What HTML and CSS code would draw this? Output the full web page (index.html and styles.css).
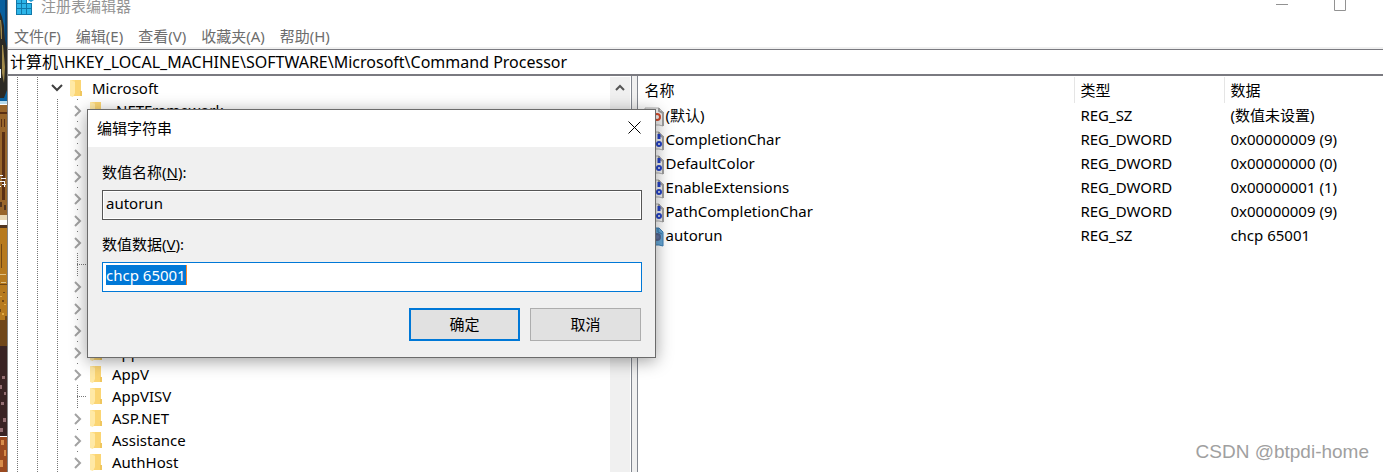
FILE: index.html
```html
<!DOCTYPE html>
<html lang="zh-CN">
<head>
<meta charset="utf-8">
<title>注册表编辑器</title>
<link rel="stylesheet" href="styles.css">
</head>
<body>
<svg class="sprites" aria-hidden="true">
  <symbol id="folder" viewBox="0 0 12 18">
    <path d="M1 1h10v12h1v4H1z" fill="#ffdd83"/>
    <path d="M5 1h6v12h1v4H4z" fill="#fbd573"/>
    <path d="M0 1h1l4 2v11l-2 4-3-1z" fill="#ffe9a6"/>
    <path d="M10 12h2v5h-2z" fill="#efc65f"/>
  </symbol>
  <symbol id="expand" viewBox="0 0 8 12">
    <path d="M1 1l5 5-5 5" fill="none" stroke="#a2a2a2" stroke-width="2"/>
  </symbol>
  <symbol id="page" viewBox="0 0 20 20">
    <path d="M1 1h14l4 4v14l-4-1H1z" fill="#f1f1f1" stroke="#b0b0b0"/>
    <path d="M15 1v3l4 2" fill="none" stroke="#9c9c9c" stroke-width="2"/>
    <path d="M19 5v14" stroke="#a0a0a0" stroke-width="2"/>
  </symbol>
  <symbol id="binary" viewBox="0 0 20 20">
    <use href="#page"/>
    <path d="M5 4v5M10 12v5M15 3v5" stroke="#2442c8" stroke-width="3"/>
    <circle cx="15" cy="13" r="2" fill="#f1f1f1" stroke="#2442c8" stroke-width="2"/>
    <circle cx="6" cy="13" r="2" fill="#f1f1f1" stroke="#2442c8" stroke-width="2"/>
  </symbol>
  <symbol id="string" viewBox="0 0 20 20">
    <use href="#page"/>
    <circle cx="13" cy="10" r="3" fill="none" stroke="#cf4a2b" stroke-width="2"/>
    <path d="M9 4v9M3 9h4v4H3z" fill="none" stroke="#cf4a2b" stroke-width="2"/>
  </symbol>
  <symbol id="string-selected" viewBox="0 0 20 20">
    <path d="M1 1h14l4 4v14l-4-1H1z" fill="#68a8d6" stroke="#3c7fb5"/>
    <path d="M14 1v4l4 2" fill="none" stroke="#3578ad"/>
    <circle cx="13" cy="10" r="3" fill="#6577a4" stroke="#55658f" stroke-width="2"/>
  </symbol>
</svg>
<div class="screen">
  <svg class="desktop" viewBox="0 0 7 472" preserveAspectRatio="none" aria-hidden="true">
    <path fill="#09609e" d="M0 0h7v102H0z"/>
    <path fill="#07406f" d="M5 0h2v48H5z"/>
    <path fill="#2c2a24" d="M0 12l2 5 2 9 1 14 2 8v42l-3 8H0z"/>
    <path fill="#a08a4c" d="M0 20h1l1 9v10H1zM2 45h1l2 22-1 16-2-10z"/>
    <path fill="#b7dced" d="M0 101h7v3H0z"/>
    <path fill="#98662b" d="M0 105h7v110H0z"/>
    <path fill="#593015" d="M0 112h7v2H0zM1 119h1v8H1zM4 119h1v8H4zM2 132h3v68H2z"/>
    <path fill="#e9d8b4" d="M0 215h7v5H0z"/>
    <path fill="#51351f" d="M0 202h2v5H0zM4 205h2v5H4zM0 225h7v3H0z"/>
    <path fill="#b77a1e" d="M0 228h7v92H0z"/>
    <path fill="#dfc083" d="M0 274h6v1H0zM1 282h5v1H1z"/>
    <path fill="#714715" d="M1 244h1v24H1zM0 284h7v1H0zM2 300h2v2H2zM0 309h1v3H0zM5 316h2v4H5zM3 292h2v1H3z"/>
    <path fill="#e0aa45" d="M0 296h2v1H0zM4 304h2v1H4zM2 313h2v2H2z"/>
    <path fill="#70471a" d="M0 320h7v36H0z"/>
    <path fill="#3a2424" d="M0 346h7v90H0z"/>
    <path fill="#946f72" d="M2 376h3v3H2zM0 385h2v4H0zM4 392h2v3H4zM1 402h3v3H1zM3 418h3v4H3zM0 428h3v4H0z"/>
    <path fill="#9a4a20" d="M0 437h7v35H0z"/>
    <path fill="#d78d4b" d="M1 440h3v5H1zM4 450h2v6H4zM0 460h3v7H0z"/>
    <path fill="#f4f8fa" d="M0 69h1v9H0zM0 175h3v1H0zM1 178h5v1H1zM0 181h4v1H0zM2 184h4v1H2zM0 186h1v1H0zM4 181h1v6H4z"/>
  </svg>
  <main class="window">
    <header class="titlebar">
      <svg class="app-icon" viewBox="0 0 20 16" aria-hidden="true">
        <path fill="#1179aa" d="M1 0h16v15H1z"/>
        <path fill="#2db5e8" d="M2 0h4v3H2zM7 0h4v3H7zM2 4h4v4H2zM7 4h4v4H7zM12 4h4v4h-4zM2 9h4v5H2zM7 9h4v5H7zM12 9h4v5h-4z"/>
        <path fill="#fff" d="M12 0h6v3h-6z"/>
        <path fill="#2498ce" d="M13 0h6l-3 2z"/>
      </svg>
      <span class="app-name">注册表编辑器</span>
      <svg class="window-controls" viewBox="0 0 70 12" aria-hidden="true"><path d="M0 4.500h12M58.500 0v10.500h11V0" fill="none" stroke="#929292"/></svg>
    </header>
    <nav class="menubar">
      <button type="button">文件(F)</button>
      <button type="button">编辑(E)</button>
      <button type="button">查看(V)</button>
      <button type="button">收藏夹(A)</button>
      <button type="button">帮助(H)</button>
    </nav>
    <input class="address" aria-label="地址" value="计算机\HKEY_LOCAL_MACHINE\SOFTWARE\Microsoft\Command Processor">
    <div class="panes">
      <section class="tree-pane" aria-label="注册表项">
        <ul class="tree">
          <li class="root"><svg class="collapse" viewBox="0 0 12 8" aria-hidden="true"><path d="M1 1l5 5 5-5" fill="none" stroke="#404040" stroke-width="2"/></svg><svg class="folder"><use href="#folder"/></svg><span>Microsoft</span></li>
          <li><svg class="expand"><use href="#expand"/></svg><svg class="folder"><use href="#folder"/></svg><span>.NETFramework</span></li>
          <li><svg class="expand"><use href="#expand"/></svg></li>
          <li><svg class="expand"><use href="#expand"/></svg></li>
          <li><svg class="expand"><use href="#expand"/></svg></li>
          <li><svg class="expand"><use href="#expand"/></svg></li>
          <li><svg class="expand"><use href="#expand"/></svg></li>
          <li><svg class="expand"><use href="#expand"/></svg></li>
          <li class="leaf"></li>
          <li><svg class="expand"><use href="#expand"/></svg></li>
          <li><svg class="expand"><use href="#expand"/></svg></li>
          <li><svg class="expand"><use href="#expand"/></svg></li>
          <li><svg class="expand"><use href="#expand"/></svg><svg class="folder"><use href="#folder"/></svg><span>AppServiceProtocols</span></li>
          <li><svg class="expand"><use href="#expand"/></svg><svg class="folder"><use href="#folder"/></svg><span>AppV</span></li>
          <li class="leaf"><svg class="folder"><use href="#folder"/></svg><span>AppVISV</span></li>
          <li><svg class="expand"><use href="#expand"/></svg><svg class="folder"><use href="#folder"/></svg><span>ASP.NET</span></li>
          <li><svg class="expand"><use href="#expand"/></svg><svg class="folder"><use href="#folder"/></svg><span>Assistance</span></li>
          <li><svg class="expand"><use href="#expand"/></svg><svg class="folder"><use href="#folder"/></svg><span>AuthHost</span></li>
        </ul>
        <div class="scrollbar"><svg viewBox="0 0 10 7" aria-hidden="true"><path d="M1 6l4-4 4 4" fill="none" stroke="#555" stroke-width="2"/></svg></div>
      </section>
      <section class="list-pane" aria-label="值">
        <table>
          <thead><tr><th class="name-col">名称</th><th class="type-col">类型</th><th>数据</th></tr></thead>
          <tbody>
            <tr><td><svg class="value-icon"><use href="#string"/></svg>(默认)</td><td>REG_SZ</td><td>(数值未设置)</td></tr>
            <tr><td><svg class="value-icon"><use href="#binary"/></svg>CompletionChar</td><td>REG_DWORD</td><td>0x00000009 (9)</td></tr>
            <tr><td><svg class="value-icon"><use href="#binary"/></svg>DefaultColor</td><td>REG_DWORD</td><td>0x00000000 (0)</td></tr>
            <tr><td><svg class="value-icon"><use href="#binary"/></svg>EnableExtensions</td><td>REG_DWORD</td><td>0x00000001 (1)</td></tr>
            <tr><td><svg class="value-icon"><use href="#binary"/></svg>PathCompletionChar</td><td>REG_DWORD</td><td>0x00000009 (9)</td></tr>
            <tr><td><svg class="value-icon"><use href="#string-selected"/></svg>autorun</td><td>REG_SZ</td><td>chcp 65001</td></tr>
          </tbody>
        </table>
      </section>
    </div>
  </main>
  <form class="dialog" role="dialog" aria-labelledby="dialog-title">
    <header class="dialog-title">
      <span id="dialog-title">编辑字符串</span>
      <button class="close" type="button" aria-label="关闭"><svg viewBox="0 0 13 13"><path d="M.5.500l12 12M12.500.500l-12 12" fill="none" stroke="#000"/></svg></button>
    </header>
    <div class="dialog-body">
      <label for="value-name">数值名称(<u>N</u>):</label>
      <div class="field readonly"><input id="value-name" value="autorun" readonly></div>
      <label for="value-data">数值数据(<u>V</u>):</label>
      <div class="field active"><input id="value-data" value="chcp 65001"></div>
      <div class="actions">
        <button class="primary" type="button">确定</button>
        <button type="button">取消</button>
      </div>
    </div>
  </form>
  <div class="watermark">CSDN @btpdi-home</div>
</div>
</body>
</html>
```
FILE: styles.css
```css
* { box-sizing: border-box; }
body {
  margin: 0;
  overflow: hidden;
  font: 15px/22px "Noto Sans", "Noto Sans CJK SC", sans-serif;
  color: #000;
}
button, input { font: inherit; color: inherit; }
.sprites { display: none; }
.screen {
  position: relative;
  display: flex;
  height: 100vh;
  overflow: hidden;
}
.desktop { flex: none; width: 7px; height: 100%; }
.window {
  flex: 1;
  min-width: 0;
  display: flex;
  flex-direction: column;
  border-left: 1px solid #858585;
  background: #fff;
}
.titlebar {
  display: flex;
  align-items: flex-start;
  height: 24px;
  padding: 0 37px 0 7px;
  color: #949494;
}
.app-icon { width: 20px; height: 16px; }
.app-name { margin-left: 6px; line-height: 12px; }
.window-controls { width: 70px; height: 12px; margin-left: auto; }
.menubar {
  display: flex;
  gap: 15px;
  height: 25px;
  padding-left: 6px;
  border-bottom: 2px solid #f0f0f0;
  color: #6d6d6d;
}
.menubar button { padding: 0; border: 0; background: none; line-height: 24px; }
.address {
  flex: none;
  width: 100%;
  height: 27px;
  padding: 0 3px 2px 2px;
  border: solid #7a7a80;
  border-width: 1px 0 2px;
  outline: 0;
  font-size: 16px;
}
.panes { flex: 1; min-height: 0; display: flex; }
.tree-pane {
  flex: none;
  width: 45.350%;
  display: flex;
  overflow: hidden;
  border-right: 1px solid #828790;
}
.tree {
  flex: 1;
  margin: 0;
  padding: 1px 0 0;
  list-style: none;
  --dots: repeating-linear-gradient(#777 0 1px, transparent 1px 2px);
}
.tree li {
  display: flex;
  align-items: center;
  height: 22px;
  padding-left: 66px;
  background: var(--dots) 9px 0 / 1px 100% no-repeat, var(--dots) 29px 0 / 1px 100% no-repeat, var(--dots) 49px 0 / 1px 100% no-repeat, var(--dots) 69px 0 / 1px 100% no-repeat;
}
.tree .root {
  padding-left: 43px;
  background: var(--dots) 9px 0 / 1px 100% no-repeat, var(--dots) 29px 0 / 1px 100% no-repeat;
}
.tree .leaf {
  padding-left: 82px;
  background: var(--dots) 9px 0 / 1px 100% no-repeat, var(--dots) 29px 0 / 1px 100% no-repeat, var(--dots) 49px 0 / 1px 100% no-repeat, var(--dots) 69px 0 / 1px 100% no-repeat, repeating-linear-gradient(90deg, #777 0 1px, transparent 1px 2px) 69px 11px / 10px 1px no-repeat;
}
.expand { width: 8px; height: 20px; padding: 5px 0 3px; margin-right: 8px; background: #fff; }
.collapse { width: 12px; height: 8px; margin-right: 7px; }
.folder { width: 12px; height: 18px; margin-right: 10px; }
.scrollbar {
  width: 21px;
  margin-top: 1px;
  padding-top: 7px;
  border-right: 1px solid #fff;
  background: #f0f0f0;
}
.scrollbar svg { display: block; width: 10px; height: 7px; margin: 0 auto; }
.list-pane {
  flex: 1;
  min-width: 0;
  margin-left: 5px;
  border-left: 1px solid #828790;
  box-shadow: -5px 0 #f0f0f0;
}
table { width: 100%; border-collapse: collapse; table-layout: fixed; }
th { height: 27px; padding: 0 6px 0 7px; font-weight: 400; text-align: left; }
th + th { background: linear-gradient(#e5e5e5, #e5e5e5) 0 1px / 1px 26px no-repeat; padding-left: 6px; }
td { height: 24px; padding: 0 6px; white-space: nowrap; line-height: 24px; }
.name-col { width: 58.600%; }
.type-col { width: 150px; }
.value-icon { width: 20px; height: 20px; margin-right: 2px; vertical-align: middle; }
.dialog {
  position: absolute;
  left: 87px;
  top: 109px;
  width: 569px;
  border: 1px solid #6b6b6b;
  background: #f0f0f0;
  box-shadow: 0 3px 16px rgba(0, 0, 0, .38);
}
.dialog-title {
  display: flex;
  justify-content: space-between;
  align-items: center;
  height: 37px;
  padding: 0 14px 2px 9px;
  background: #fff;
}
.close { padding: 0; border: 0; background: none; line-height: 0; }
.close svg { width: 13px; height: 13px; }
.dialog-body { padding: 14px 13px 16px 14px; }
label { display: block; height: 29px; line-height: 22px; }
.field { display: flex; align-items: flex-start; height: 30px; padding: 2px 3px; border: 1px solid #555; }
.readonly { margin-bottom: 13px; box-shadow: inset 0 0 0 1px #fff; }
.field input { height: 20px; min-width: 0; padding: 0; border: 0; outline: 0; background: none; }
.readonly input { flex: 1; }
.active { background: #fff; border-color: #0078d7; }
.active input {
  field-sizing: content;
  border-right: 1px solid #ff8728;
  background: #0078d7;
  color: #fff;
}
.actions { display: flex; justify-content: flex-end; gap: 10px; margin: 16px 1px 0 0; }
.actions button { width: 111px; height: 33px; padding: 0 0 2px; border: 1px solid #adadad; background: #e1e1e1; }
.actions .primary { border: 2px solid #0078d7; }
.watermark {
  position: absolute;
  right: 14px;
  bottom: 8px;
  font: 19px/24px "Liberation Sans", sans-serif;
  color: #a0a0a0;
}
```
